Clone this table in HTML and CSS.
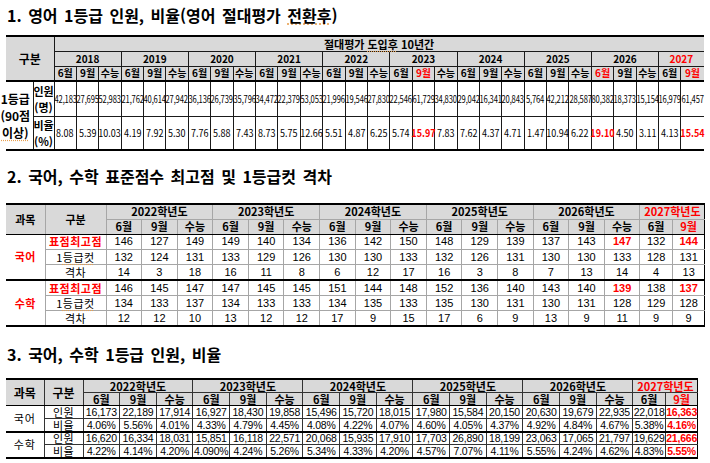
FILE: index.html
```html
<!DOCTYPE html>
<html lang="ko">
<head>
<meta charset="utf-8">
<title>영어 1등급 인원, 비율</title>
<link rel="stylesheet" href="styles.css">
</head>
<body>
<div class="page">
<h2 class="title">1. 영어 1등급 인원, 비율(영어 절대평가 <span class="sp">전환후</span>)</h2>
<table class="t1">
<colgroup><col class="c1"><col class="c2"><col span="29" class="cy"></colgroup>
<tr class="r1 hd"><th class="gh el" colspan="2" rowspan="3">구분</th><th class="top er" colspan="29">절대평가 <span class="sp">도입후</span> 10년간</th></tr>
<tr class="r2 hd"><th colspan="3">2018</th><th colspan="3">2019</th><th colspan="3">2020</th><th colspan="3">2021</th><th colspan="3">2022</th><th colspan="3">2023</th><th colspan="3">2024</th><th colspan="3">2025</th><th colspan="3">2026</th><th colspan="2" class="red er">2027</th></tr>
<tr class="r3 hd hb"><th>6월</th><th>9월</th><th>수능</th><th>6월</th><th>9월</th><th>수능</th><th>6월</th><th>9월</th><th>수능</th><th>6월</th><th>9월</th><th>수능</th><th>6월</th><th>9월</th><th>수능</th><th>6월</th><th class="red">9월</th><th>수능</th><th>6월</th><th>9월</th><th>수능</th><th>6월</th><th>9월</th><th>수능</th><th class="red">6월</th><th>9월</th><th>수능</th><th>6월</th><th class="red er">9월</th></tr>
<tr class="r4"><th rowspan="2" class="lab el"><span class="labin">1등급<br>(90점<br><span class="sp">이상)</span></span></th><th class="sub">인원<br>(명)</th><td><span class="sq">42,183</span></td><td><span class="sq">27,695</span></td><td><span class="sq">52,983</span></td><td><span class="sq">21,762</span></td><td><span class="sq">40,614</span></td><td><span class="sq">27,942</span></td><td><span class="sq">36,136</span></td><td><span class="sq">26,739</span></td><td><span class="sq">35,796</span></td><td><span class="sq">34,472</span></td><td><span class="sq">22,379</span></td><td><span class="sq">53,053</span></td><td><span class="sq">21,996</span></td><td><span class="sq">19,546</span></td><td><span class="sq">27,830</span></td><td><span class="sq">22,546</span></td><td><span class="sq">61,729</span></td><td><span class="sq">34,830</span></td><td><span class="sq">29,042</span></td><td><span class="sq">16,341</span></td><td><span class="sq">20,843</span></td><td><span class="sq">5,764</span></td><td><span class="sq">42,212</span></td><td><span class="sq">28,587</span></td><td><span class="sq">80,382</span></td><td><span class="sq">18,373</span></td><td><span class="sq">15,154</span></td><td><span class="sq">16,979</span></td><td class="er"><span class="sq">61,457</span></td></tr>
<tr class="r5"><th class="sub">비율<br>(%)</th><td><span class="sr">8.08</span></td><td><span class="sr">5.39</span></td><td><span class="sr">10.03</span></td><td><span class="sr">4.19</span></td><td><span class="sr">7.92</span></td><td><span class="sr">5.30</span></td><td><span class="sr">7.76</span></td><td><span class="sr">5.88</span></td><td><span class="sr">7.43</span></td><td><span class="sr">8.73</span></td><td><span class="sr">5.75</span></td><td><span class="sr">12.66</span></td><td><span class="sr">5.51</span></td><td><span class="sr">4.87</span></td><td><span class="sr">6.25</span></td><td><span class="sr">5.74</span></td><td class="red b"><span class="sr">15.97</span></td><td><span class="sr">7.83</span></td><td><span class="sr">7.62</span></td><td><span class="sr">4.37</span></td><td><span class="sr">4.71</span></td><td><span class="sr">1.47</span></td><td><span class="sr">10.94</span></td><td><span class="sr">6.22</span></td><td class="red b"><span class="sr">19.10</span></td><td><span class="sr">4.50</span></td><td><span class="sr">3.11</span></td><td><span class="sr">4.13</span></td><td class="red b er"><span class="sr">15.54</span></td></tr>
</table>

<h2 class="title sec">2. 국어, 수학 표준점수 최고점 및 1등급컷 격차</h2>
<table class="t2">
<colgroup><col class="k1"><col class="k2"><col span="15" class="ky"><col span="2" class="kz"></colgroup>
<tr class="hd h1"><th rowspan="2" class="el hbc">과목</th><th rowspan="2" class="hbc">구분</th><th colspan="3" class="g">2022학년도</th><th colspan="3" class="g">2023학년도</th><th colspan="3" class="g">2024학년도</th><th colspan="3" class="g">2025학년도</th><th colspan="3" class="g">2026학년도</th><th colspan="2" class="g red er">2027학년도</th></tr>
<tr class="hd h2 hb"><th class="g">6월</th><th>9월</th><th>수능</th><th class="g">6월</th><th>9월</th><th>수능</th><th class="g">6월</th><th>9월</th><th>수능</th><th class="g">6월</th><th>9월</th><th>수능</th><th class="g">6월</th><th>9월</th><th>수능</th><th class="g">6월</th><th class="red er">9월</th></tr>
<tr class="dr"><td rowspan="3" class="subj red b el sepc">국어</td><td class="red b lab">표점최고점</td><td class="g">146</td><td>127</td><td>149</td><td class="g">149</td><td>140</td><td>134</td><td class="g">136</td><td>142</td><td>150</td><td class="g">148</td><td>129</td><td>139</td><td class="g">137</td><td>143</td><td class="red b">147</td><td class="g">132</td><td class="red b er">144</td></tr>
<tr class="dr"><td class="lab">1<span class="sp">등급컷</span></td><td class="g">132</td><td>124</td><td>131</td><td class="g">133</td><td>129</td><td>126</td><td class="g">130</td><td>130</td><td>133</td><td class="g">132</td><td>126</td><td>131</td><td class="g">130</td><td>130</td><td>133</td><td class="g">128</td><td class="er">131</td></tr>
<tr class="dr sep"><td class="lab">격차</td><td class="g">14</td><td>3</td><td>18</td><td class="g">16</td><td>11</td><td>8</td><td class="g">6</td><td>12</td><td>17</td><td class="g">16</td><td>3</td><td>8</td><td class="g">7</td><td>13</td><td>14</td><td class="g">4</td><td class="er">13</td></tr>
<tr class="dr"><td rowspan="3" class="subj red b el">수학</td><td class="red b lab">표점최고점</td><td class="g">146</td><td>145</td><td>147</td><td class="g">147</td><td>145</td><td>145</td><td class="g">151</td><td>144</td><td>148</td><td class="g">152</td><td>136</td><td>140</td><td class="g">143</td><td>140</td><td class="red b">139</td><td class="g">138</td><td class="red b er">137</td></tr>
<tr class="dr"><td class="lab">1<span class="sp">등급컷</span></td><td class="g">134</td><td>133</td><td>137</td><td class="g">134</td><td>133</td><td>133</td><td class="g">134</td><td>135</td><td>133</td><td class="g">135</td><td>130</td><td>131</td><td class="g">130</td><td>131</td><td>128</td><td class="g">129</td><td class="er">128</td></tr>
<tr class="dr"><td class="lab">격차</td><td class="g">12</td><td>12</td><td>10</td><td class="g">13</td><td>12</td><td>12</td><td class="g">17</td><td>9</td><td>15</td><td class="g">17</td><td>6</td><td>9</td><td class="g">13</td><td>9</td><td>11</td><td class="g">9</td><td class="er">9</td></tr>
</table>

<h2 class="title sec sec3">3. 국어, 수학 1등급 인원, 비율</h2>
<table class="t3">
<colgroup><col class="m1"><col class="m2"><col span="15" class="my"><col span="2" class="mz"></colgroup>
<tr class="hd h1"><th rowspan="2" class="el hbc big">과목</th><th rowspan="2" class="hbc big">구분</th><th colspan="3" class="g">2022학년도</th><th colspan="3" class="g">2023학년도</th><th colspan="3" class="g">2024학년도</th><th colspan="3" class="g">2025학년도</th><th colspan="3" class="g">2026학년도</th><th colspan="2" class="g red er">2027학년도</th></tr>
<tr class="hd h2 hb"><th class="g">6월</th><th>9월</th><th>수능</th><th class="g">6월</th><th>9월</th><th>수능</th><th class="g">6월</th><th>9월</th><th>수능</th><th class="g">6월</th><th>9월</th><th>수능</th><th class="g">6월</th><th>9월</th><th>수능</th><th class="g">6월</th><th class="red er">9월</th></tr>
<tr class="dr"><td rowspan="2" class="subj el sepc">국어</td><td class="lab">인원</td><td class="g">16,173</td><td>22,189</td><td>17,914</td><td class="g">16,927</td><td>18,430</td><td>19,858</td><td class="g">15,496</td><td>15,720</td><td>18,015</td><td class="g">17,980</td><td>15,584</td><td>20,150</td><td class="g">20,630</td><td>19,679</td><td>22,935</td><td class="g">22,018</td><td class="red b er">16,363</td></tr>
<tr class="dr sep"><td class="lab">비율</td><td class="g">4.06%</td><td>5.56%</td><td>4.01%</td><td class="g">4.33%</td><td>4.79%</td><td>4.45%</td><td class="g">4.08%</td><td>4.22%</td><td>4.07%</td><td class="g">4.60%</td><td>4.05%</td><td>4.37%</td><td class="g">4.92%</td><td>4.84%</td><td>4.67%</td><td class="g">5.38%</td><td class="red b er">4.16%</td></tr>
<tr class="dr"><td rowspan="2" class="subj el">수학</td><td class="lab">인원</td><td class="g">16,620</td><td>16,334</td><td>18,031</td><td class="g">15,851</td><td>16,118</td><td>22,571</td><td class="g">20,068</td><td>15,935</td><td>17,910</td><td class="g">17,703</td><td>26,890</td><td>18,199</td><td class="g">23,063</td><td>17,065</td><td>21,797</td><td class="g">19,629</td><td class="red b er">21,666</td></tr>
<tr class="dr"><td class="lab">비율</td><td class="g">4.22%</td><td>4.14%</td><td>4.20%</td><td class="g">4.090%</td><td>4.24%</td><td>5.26%</td><td class="g">5.34%</td><td>4.33%</td><td>4.20%</td><td class="g">4.57%</td><td>7.07%</td><td>4.11%</td><td class="g">5.55%</td><td>4.24%</td><td>4.62%</td><td class="g">4.83%</td><td class="red b er">5.55%</td></tr>
</table>
</div>
</body>
</html>
```

FILE: styles.css
```css
* { box-sizing: border-box; }
html, body { margin: 0; padding: 0; background: #fff; }
body {
  color: #000;
  font-family: "Noto Sans CJK KR", "Noto Sans", sans-serif;
}
.page { padding: 5px 6px 0 6px; }

.title {
  margin: 0;
  padding-left: 1px;
  font-size: 16px;
  line-height: 20px;
  height: 20px;
  font-weight: 700;
  white-space: nowrap;
  word-spacing: 2px;
}
.title.sec { margin-top: 15px; }
.title.sec3 { margin-top: 17px; }

.sp {
  text-decoration: underline dotted #e8a050;
  text-underline-offset: 2px;
}
.red { color: #ff0000; }
.b { font-weight: 700; }

table {
  border-collapse: collapse;
  table-layout: fixed;
}
th, td {
  padding: 0;
  text-align: center;
  vertical-align: middle;
  white-space: nowrap;
  overflow: visible;
}
.hd th { background: #d9d9d9; }

/* ---------- table 1 ---------- */
.t1 {
  width: 697.6px;
  margin-top: 10px;
  border-top: 2px solid #000;
  border-bottom: 2px solid #000;
}
.t1 .c1 { width: 27px; }
.t1 .c2 { width: 21px; }
.t1 .cy { width: 22.4px; }
.t1 th, .t1 td { border: 1px solid #1a1a1a; line-height: 12px; }
.t1 .el { border-left: none; }
.t1 .er { border-right: none; }
.t1 th { font-size: 10px; font-weight: 700; }
.t1 .top { font-size: 11px; }
.t1 .gh { font-size: 12px; border-bottom: 2px solid #000; }
.t1 .hb > * { border-bottom: 2px solid #000; }
.t1 .r1 { height: 15px; }
.t1 .r2 { height: 15px; }
.t1 .r3 { height: 15px; }
.t1 .r4 { height: 35px; }
.t1 .r5 { height: 34px; }
.t1 .lab { font-size: 12px; line-height: 17px; background: #fff; }
.t1 .labin { display: block; margin: 0 -2px 0 -10px; }
.t1 .sub { font-size: 11px; line-height: 16px; background: #fff; }
.t1 td { font-size: 10px; }
.t1 .sq, .t1 .sr {
  display: inline-block;
  margin: 0 -10px;
  transform-origin: 50% 50%;
}
.t1 .sq { transform: scaleX(0.76); letter-spacing: -0.2px; }
.t1 .sr { transform: scaleX(0.9); }

/* ---------- table 2 ---------- */
.t2 {
  width: 699px;
  margin-top: 17px;
  border-top: 2px solid #000;
  border-bottom: 2px solid #000;
}
.t2 .k1 { width: 39px; }
.t2 .k2 { width: 61px; }
.t2 .ky { width: 35.6px; }
.t2 .kz { width: 32.5px; }
.t2 th, .t2 td { border: 1px solid #a6a6a6; line-height: 13px; }
.t2 .g { border-left: 1px solid #000; }
.t2 .el { border-left: none; }
.t2 .er { border-right: 1px solid #000; }
.t2 .hb > *, .t2 .hbc { border-bottom: 1px solid #000; }
.t2 .sep > *, .t2 .sepc { border-bottom: 2px solid #000; }
.t2 th { font-size: 11px; font-weight: 700; }
.t2 .h1 { height: 15px; }
.t2 .h2 { height: 15px; }
.t2 .dr { height: 15.4px; }
.t2 td {
  font-family: "Liberation Sans", "Noto Sans CJK KR", sans-serif;
  font-size: 11px;
}
.t2 .lab, .t2 .subj {
  font-family: "Noto Sans CJK KR", sans-serif;
  letter-spacing: 0.5px;
}

/* ---------- table 3 ---------- */
.t3 {
  width: 692px;
  margin-top: 14px;
  border-top: 2px solid #000;
  border-bottom: 2px solid #000;
}
.t3 .m1 { width: 38px; }
.t3 .m2 { width: 39px; }
.t3 .my { width: 36.67px; }
.t3 .mz { width: 32.5px; }
.t3 th, .t3 td { border: 1px solid #333; }
.t3 .g { border-left: 1px solid #000; }
.t3 .el { border-left: none; }
.t3 .er { border-right: 1px solid #000; }
.t3 .hb > *, .t3 .hbc { border-bottom: 1px solid #000; }
.t3 .sep > *, .t3 .sepc { border-bottom: 2px solid #000; }
.t3 th { font-size: 11px; font-weight: 700; line-height: 12px; }
.t3 .big { font-size: 12px; }
.t3 .h1 { height: 13px; }
.t3 .h2 { height: 13px; }
.t3 .dr { height: 13px; }
.t3 td {
  font-family: "Liberation Sans", "Noto Sans CJK KR", sans-serif;
  font-size: 10.5px;
  line-height: 11px;
  letter-spacing: -0.2px;
}
.t3 .subj, .t3 .lab {
  font-family: "Noto Sans CJK KR", sans-serif;
  font-size: 11px;
}
.t3 .subj { letter-spacing: 1px; }
.t3 .lab { letter-spacing: 0.5px; }
```
